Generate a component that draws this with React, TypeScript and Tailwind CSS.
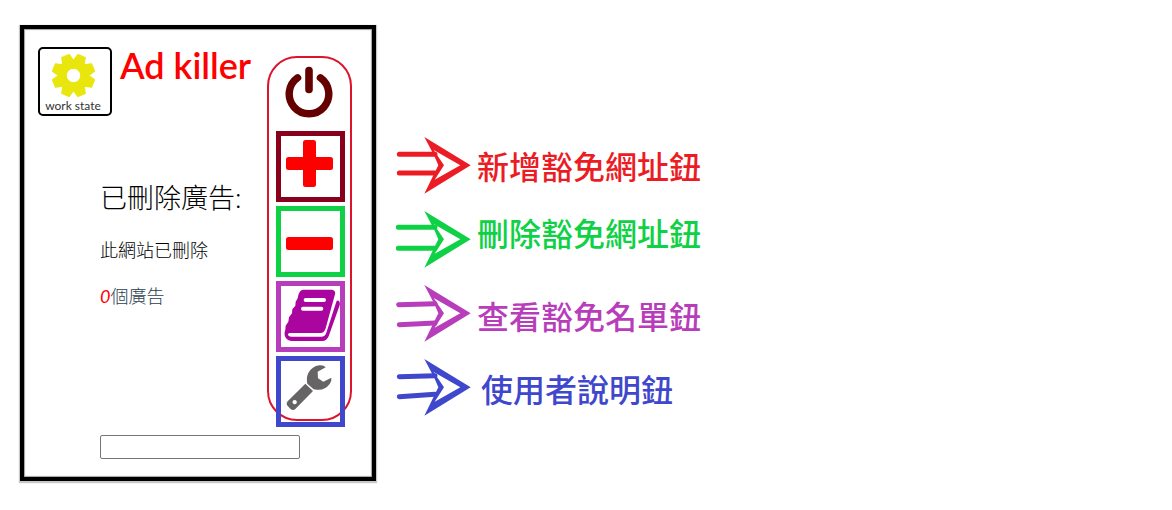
import type { ReactNode } from 'react';

function GearIcon() {
  const teeth = [22.5, 67.5, 112.5, 157.5, 202.5, 247.5, 292.5, 337.5];
  return (
    <svg viewBox="-23 -23 46 46" className="h-[45px] w-[45px]" aria-hidden="true">
      <g fill="#e8e60c" stroke="#e8e60c" strokeWidth="1.5" strokeLinejoin="round">
        {teeth.map((a) => (
          <path key={a} d="M-6 -13 L-4 -21.4 L4 -21.4 L6 -13 Z" transform={`rotate(${a})`} />
        ))}
      </g>
      <circle r="11.4" fill="none" stroke="#e8e60c" strokeWidth="9" />
    </svg>
  );
}

function PowerIcon() {
  return (
    <svg viewBox="0 0 48 52" className="h-13 w-12" fill="none" stroke="#640000" strokeLinecap="round" aria-hidden="true">
      <path d="M12.6 11.8 A19.8 19.8 0 1 0 35.4 11.8" strokeWidth="7.4" />
      <path d="M24 4.5 V23.5" strokeWidth="7.6" />
    </svg>
  );
}

function PlusIcon() {
  return (
    <svg viewBox="0 0 59 61" className="w-full" fill="#ff0000" aria-hidden="true">
      <rect x="5" y="21" width="47" height="13" rx="2.5" />
      <rect x="22" y="4" width="13" height="47" rx="2.5" />
    </svg>
  );
}

function MinusIcon() {
  return (
    <svg viewBox="0 0 59 61" className="w-full" fill="#ff0000" aria-hidden="true">
      <rect x="5" y="26" width="47" height="13" rx="2.5" />
    </svg>
  );
}

function BookIcon() {
  return (
    <svg viewBox="19 15 177 183" className="w-full" aria-hidden="true">
      <path
        fill="#ab05a0"
        d="M85 26 H170 Q184 27 181 40 L153 142 Q149 156 138 156 H46 Q38 157 40 162 Q42 167 50 167 H140 Q151 167 155 155 L185 62 Q188 56 193 60 Q197 65 195 73 L162 166 Q156 180 143 180 H50 Q36 179 31 166 Q28 157 32 146 L33 134 L41 122 L43 109 L52 97 L53 85 L62 74 L63 62 L69 52 L71 42 Q75 27 85 26 Z"
      />
      <path d="M93 57 H148 M85 83 H140" fill="none" stroke="white" strokeWidth="12" strokeLinecap="round" />
    </svg>
  );
}

function WrenchIcon() {
  return (
    <svg viewBox="63 255 177 186" className="w-full" fill="#666464" aria-hidden="true">
      <path d="M197 274 L173 287 L174 307 L190 317 L214 305 Q216 314 209 324 Q194 344 170 341 L161 340 L142 323 Q138 306 145 291 Q156 271 178 268 Q192 267 197 274 Z" />
      <path
        fillRule="evenodd"
        d="M136 323 L159 345 L106 399 Q99 406 91 398 L83 390 Q77 383 83 376 Z M104 372 a6.5 6.5 0 1 0 0.1 0 Z"
      />
    </svg>
  );
}

function ArrowIcon({ shafts }: { shafts: string }) {
  return (
    <svg viewBox="33 18 231 177" className="h-[59px] w-[77px] shrink-0" aria-hidden="true">
      <path d={shafts} fill="none" stroke="currentColor" strokeWidth="15" strokeLinecap="round" />
      <path
        fill="currentColor"
        fillRule="evenodd"
        d="M118 21 L257 106 L118 191 L147 132 L160 106 L147 76 Z M146 60 L226 106 L149 149 L177 106 Z"
      />
    </svg>
  );
}

type Action = { label: string; style: string; icon: ReactNode };

const actions: Action[] = [
  { label: '新增豁免網址', style: 'border-[#88001b]', icon: <PlusIcon /> },
  { label: '刪除豁免網址', style: 'border-[#0ed145]', icon: <MinusIcon /> },
  { label: '查看豁免名單', style: 'border-[#b83dba]', icon: <BookIcon /> },
  { label: '使用者說明', style: 'border-[#3f48cc]', icon: <WrenchIcon /> },
];

const notes = [
  { text: '新增豁免網址鈕', style: 'text-[#ec1c24]', pad: 'pb-0.5', shafts: 'M43 73 H150 M43 129 H150' },
  { text: '刪除豁免網址鈕', style: 'text-[#0ed145]', pad: 'pb-4', shafts: 'M40 70 H150 M40 133 H150' },
  { text: '查看豁免名單鈕', style: 'text-[#b83dba]', pad: 'pt-0.5', shafts: 'M41 80 L150 77 M43 140 L150 135' },
  { text: '使用者說明鈕', style: 'text-[#3f48cc]', pad: 'pl-1', shafts: 'M43 74 L150 71 M43 134 L150 127' },
];

function Popup() {
  return (
    <section className="w-[356px] shrink-0 border-4 border-black bg-white pb-[18px] font-['Lato','Noto_Sans_CJK_TC',sans-serif] shadow-[0_1px_1px_1px_#c8c8c8,inset_0_0_1px_1px_#a0a0a0]">
      <div className="flex justify-between pt-[18px] pr-5 pl-[14px]">
        <div>
          <div className="flex items-start gap-2">
            <div className="flex h-[69px] w-[74px] flex-col items-center rounded-[5px] border-2 border-black pt-1 pr-1">
              <GearIcon />
              <span className="text-[12px] leading-4 whitespace-nowrap text-[#333333]">work state</span>
            </div>
            <h1 className="text-[36px] leading-9 font-semibold whitespace-nowrap text-[#ff0000]">Ad killer</h1>
          </div>
          <div className="pt-[62px] pl-[62px] font-light whitespace-nowrap text-black">
            <h2 className="text-[27px] leading-10">已刪除廣告:</h2>
            <p className="pt-5 text-[18px] leading-6">此網站已刪除</p>
            <p className="pt-[22px] text-[18px] leading-6 text-[#2c3e50]">
              <em className="font-normal text-[#ff0000]">0</em>個廣告
            </p>
          </div>
        </div>
        <div className="mt-[9px] flex w-[85px] flex-col items-center rounded-[30px] border-2 border-[#dc142c] pt-2 pl-0.5">
          <button type="button" aria-label="電源" className="mr-1 mb-[13px] block">
            <PowerIcon />
          </button>
          <div className="-mb-2 flex flex-col gap-1">
            {actions.map((a) => (
              <button
                key={a.label}
                type="button"
                aria-label={a.label}
                className={`flex h-[71px] w-[69px] items-center border-[5px] ${a.style}`}
              >
                {a.icon}
              </button>
            ))}
          </div>
        </div>
      </div>
      <input
        type="text"
        aria-label="網址"
        className="mt-[14px] ml-[76px] block h-6 w-[200px] rounded-[2px] border border-[#767676] bg-white px-1 text-sm"
      />
    </section>
  );
}

export default function App() {
  return (
    <main className="flex min-h-screen items-start gap-5 bg-white pt-[25px] pl-5">
      <Popup />
      <ul className="flex flex-col gap-[15px] pt-[111px] font-['Noto_Sans_CJK_TC',sans-serif]">
        {notes.map((n) => (
          <li key={n.text} className={`flex h-[59px] items-center gap-1 ${n.style}`}>
            <ArrowIcon shafts={n.shafts} />
            <span className={`text-[32px] leading-10 font-medium whitespace-nowrap ${n.pad}`}>{n.text}</span>
          </li>
        ))}
      </ul>
    </main>
  );
}
